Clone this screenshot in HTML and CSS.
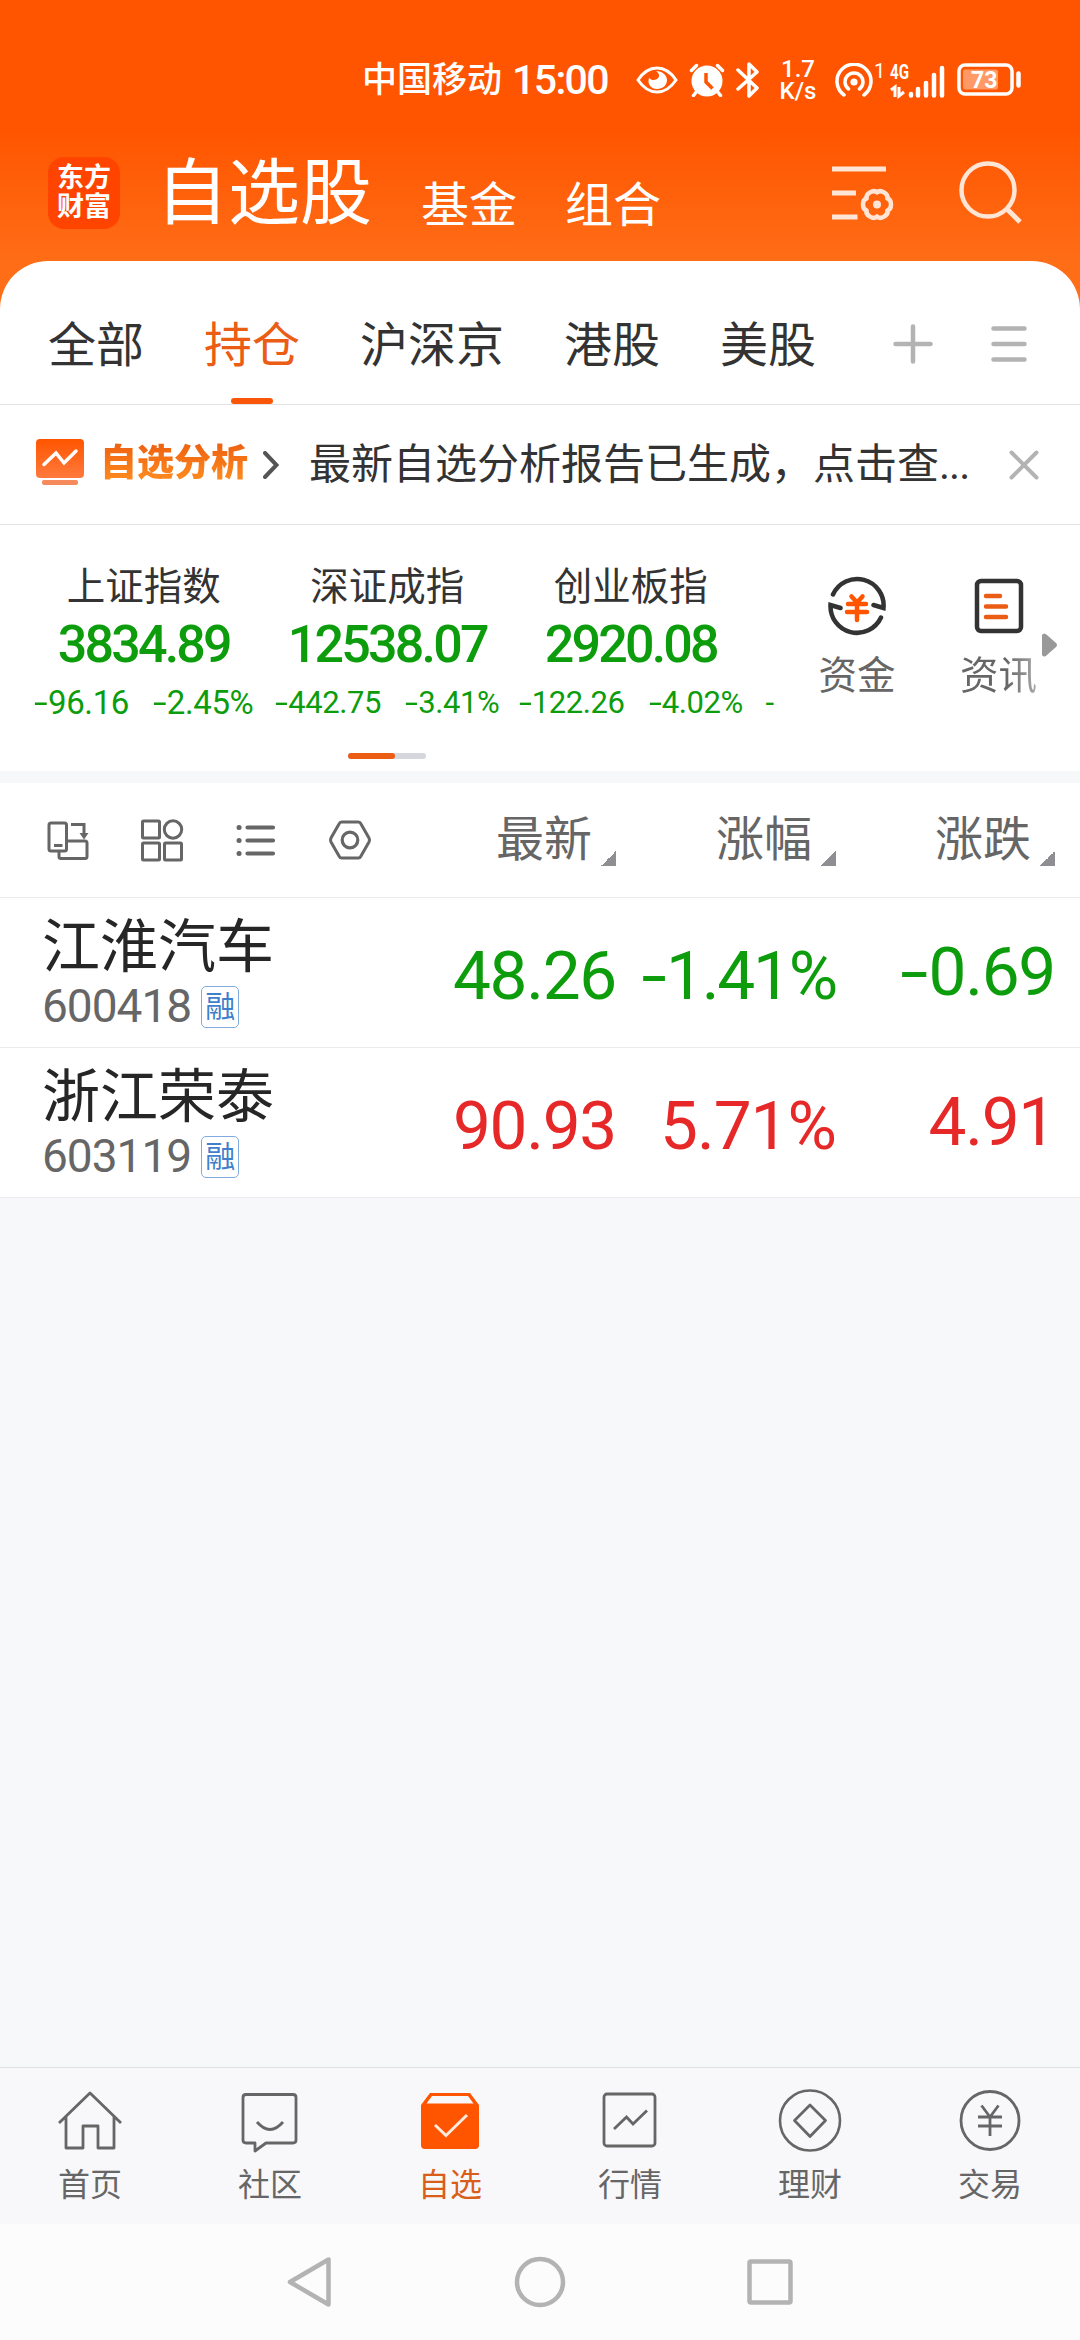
FILE: index.html
```html
<!DOCTYPE html>
<html lang="zh-CN">
<head>
    <meta charset="UTF-8">
    <meta name="viewport" content="width=device-width, initial-scale=1.0">
    <title>自选股</title>
    <link rel="stylesheet" href="styles.css">
</head>
<body>
    <div class="screen">
        <div class="status-bar">
            <span class="carrier">中国移动</span>
            <span class="clock">15:00</span>
            <svg class="st-eye" width="42" height="28" viewBox="0 0 42 28">
                <path d="M2 14C8 5 14 2 21 2s13 3 19 12c-6 9-12 12-19 12S8 23 2 14z" fill="none" stroke="#fff" stroke-width="3"/>
                <path d="M20 5c4 3 4 6 1 8-3 2-6 1-8-1-2 6 2 11 8 11s10-4 10-9-5-9-11-9z" fill="#fff"/>
            </svg>
            <svg class="st-alarm" width="36" height="34" viewBox="0 0 36 34">
                <circle cx="18" cy="18" r="15.500" fill="#fff"/>
                <path d="M2.500 7.500l5-5M33.500 7.500l-5-5M8 28l-3.500 4.500M28 28l3.500 4.500" stroke="#fff" stroke-width="3.500" stroke-linecap="round"/>
                <path d="M17 10v9l6.500 6.500" fill="none" stroke="#ff5500" stroke-width="3.500"/>
            </svg>
            <svg class="st-bt" width="24" height="38" viewBox="0 0 24 38">
                <path d="M2 9l19 18-8 8V3l8 8L2 28" fill="none" stroke="#fff" stroke-width="3.500" stroke-linejoin="round" stroke-linecap="round"/>
            </svg>
            <div class="speed"><span>1.7</span><span>K/s</span></div>
            <svg class="st-hot" width="38" height="34" viewBox="0 0 38 34">
                <circle cx="19" cy="19" r="3.600" fill="#fff"/>
                <path d="M13.500 26a9 9 0 1 1 11 0M9 32a17 17 0 1 1 20 0" fill="none" stroke="#fff" stroke-width="3.500" stroke-linecap="round"/>
            </svg>
            <svg class="st-signal" width="74" height="38" viewBox="0 0 74 38">
                <text x="1" y="17" font-size="20">1</text>
                <text x="17" y="18" font-size="20" font-weight="700" textLength="19" lengthAdjust="spacingAndGlyphs">4G</text>
                <path d="M18 29l4-3v10M26 26v9l5-4" fill="none" stroke="#fff" stroke-width="3"/>
                <path d="M38 33v1.500M45 28v6.500M53 22v12.500M61 14v20.500M69 7v27.500" stroke="#fff" stroke-width="4.500" stroke-linecap="round"/>
            </svg>
            <svg class="st-battery" width="66" height="34" viewBox="0 0 66 34">
                <rect x="2" y="2" width="53" height="29" rx="6" fill="none" stroke="#fff" stroke-width="3.500"/>
                <rect x="6" y="6.500" width="35" height="20" rx="2" fill="#ff9966"/>
                <path d="M61.500 10.500v12" stroke="#fff" stroke-width="4.500" stroke-linecap="round"/>
                <text x="14" y="25" font-size="23" font-weight="700">73</text>
            </svg>
        </div>

        <div class="app-head">
            <div class="logo"><span>东方</span><span>财富</span></div>
            <div class="head-tabs">
                <span class="head-tab current">自选股</span>
                <span class="head-tab">基金</span>
                <span class="head-tab">组合</span>
            </div>
            <svg class="head-menu" width="64" height="58" viewBox="0 0 64 58">
                <path d="M0 4h54M0 28h24M0 52h25.500" stroke="#ffe5d5" stroke-width="5"/>
                <g transform="translate(45 39.500)">
                    <path d="M0-12C3.500-15.500 11.700-10.800 10.400-6 15.200-4.700 15.200 4.700 10.400 6 11.700 10.800 3.500 15.500 0 12-3.500 15.500-11.700 10.800-10.400 6-15.200 4.700-15.200-4.700-10.400-6-11.700-10.800-3.500-15.500 0-12z" fill="none" stroke="#ffe5d5" stroke-width="4.500" stroke-linejoin="round"/>
                    <circle r="4" fill="#ffe5d5"/>
                </g>
            </svg>
            <svg class="head-search" width="64" height="64" viewBox="0 0 64 64">
                <circle cx="29" cy="29" r="26.500" fill="none" stroke="#ffe5d5" stroke-width="4.500"/>
                <path d="M47.500 47.500L61 61" stroke="#ffe5d5" stroke-width="5"/>
            </svg>
        </div>

        <div class="sheet">
            <div class="tabs">
                <span class="tab">全部</span>
                <span class="tab active">持仓</span>
                <span class="tab">沪深京</span>
                <span class="tab">港股</span>
                <span class="tab">美股</span>
                <svg class="tab-add" width="40" height="40" viewBox="0 0 40 40">
                    <path d="M20 2.500v35M2.500 20h35" stroke="#b3b3b3" stroke-width="4.500" stroke-linecap="round"/>
                </svg>
                <svg class="tab-list" width="36" height="38" viewBox="0 0 36 38">
                    <path d="M2.500 3.500h31M2.500 19h31M2.500 34.500h31" stroke="#b3b3b3" stroke-width="4.500" stroke-linecap="round"/>
                </svg>
            </div>

            <div class="notice">
                <svg class="notice-icon" width="48" height="48" viewBox="0 0 48 48">
                    <defs>
                        <linearGradient id="boxFill" x1="0" y1="0" x2="0" y2="1">
                            <stop offset="0" stop-color="#ff5500"/>
                            <stop offset="1" stop-color="#ff7a3d"/>
                        </linearGradient>
                    </defs>
                    <rect width="48" height="39" rx="4" fill="url(#boxFill)"/>
                    <path d="M8 25.500L20 14l8 10 12-12" fill="none" stroke="#fff" stroke-width="3.500" stroke-linecap="round"/>
                    <rect x="6" y="41" width="36" height="5" rx="2" fill="#f58a5c"/>
                </svg>
                <span class="notice-title">自选分析</span>
                <svg class="notice-arrow" width="16" height="28" viewBox="0 0 16 28">
                    <path d="M2 2l11.500 12L2 26" fill="none" stroke="#555" stroke-width="4" stroke-linecap="round"/>
                </svg>
                <span class="notice-text">最新自选分析报告已生成，点击查<span class="dots">...</span></span>
                <svg class="notice-close" width="30" height="30" viewBox="0 0 30 30">
                    <path d="M2.500 2.500l25 25M27.500 2.500l-25 25" stroke="#b3b3b3" stroke-width="4" stroke-linecap="round"/>
                </svg>
            </div>

            <div class="market">
                <div class="indices">
                    <div class="index">
                        <div class="index-name">上证指数</div>
                        <div class="index-value">3834.89</div>
                        <div class="index-change large"><span><b>-</b>96.16</span><span><b>-</b>2.45%</span></div>
                    </div>
                    <div class="index">
                        <div class="index-name">深证成指</div>
                        <div class="index-value">12538.07</div>
                        <div class="index-change"><span><b>-</b>442.75</span><span><b>-</b>3.41%</span></div>
                    </div>
                    <div class="index">
                        <div class="index-name">创业板指</div>
                        <div class="index-value">2920.08</div>
                        <div class="index-change"><span><b>-</b>122.26</span><span><b>-</b>4.02%</span></div>
                    </div>
                    <div class="index-next">-</div>
                </div>
                <div class="tool">
                    <svg width="60" height="60" viewBox="0 0 60 60">
                        <path d="M6 18.500A26.500 26.500 0 0 1 56.500 32l-10-3M54 41.500A26.500 26.500 0 0 1 3.500 29l10 3" fill="none" stroke="#333" stroke-width="4.500" stroke-linecap="round"/>
                        <path d="M24.500 20.500l5.500 6 5.500-6M21 28h18M20 36h20M30 27v17" fill="none" stroke="#ff5500" stroke-width="4.500" stroke-linecap="round"/>
                    </svg>
                    <span>资金</span>
                </div>
                <div class="tool last">
                    <svg width="60" height="60" viewBox="0 0 60 60">
                        <rect x="8" y="5" width="44" height="50" rx="4" fill="none" stroke="#333" stroke-width="4.500"/>
                        <path d="M17 20h14M17 30.500h20M17 41h20" stroke="#eb5c14" stroke-width="4.500" stroke-linecap="round"/>
                    </svg>
                    <span>资讯</span>
                </div>
                <svg class="more" width="15" height="24" viewBox="0 0 15 24">
                    <path d="M0 2Q2-1 5 2l9 8q2 2 0 4l-9 8q-3 3-5 0z" fill="#999"/>
                </svg>
            </div>
            <div class="pager"><i></i></div>
        </div>

        <div class="table">
            <div class="table-head">
                <div class="view-icons">
                    <svg width="44" height="44" viewBox="0 0 44 44">
                        <g fill="none" stroke="#666" stroke-width="3">
                            <rect x="3" y="5" width="17.500" height="28" rx="2"/>
                            <path d="M8 27.500h8.500M25 6.500h13V16M20.500 23H39q2 0 2 2v13.500q0 2-2 2H15q-2 0-2-2V33"/>
                        </g>
                        <path d="M33.500 15h9L38 21.500z" fill="#666"/>
                    </svg>
                    <svg width="44" height="44" viewBox="0 0 44 44">
                        <g fill="none" stroke="#666" stroke-width="3">
                            <rect x="2.500" y="3" width="17" height="17" rx="1"/>
                            <circle cx="33" cy="11.500" r="8.700"/>
                            <rect x="2.500" y="25" width="17" height="17" rx="1"/>
                            <rect x="24.500" y="25" width="17" height="17" rx="1"/>
                        </g>
                    </svg>
                    <svg width="44" height="44" viewBox="0 0 44 44">
                        <path d="M5 9.500h.1M5 22.500h.1M5 35.500h.1" stroke="#666" stroke-width="5" stroke-linecap="round"/>
                        <path d="M13.500 9.500H39M13.500 22.500H39M13.500 35.500H39" stroke="#666" stroke-width="4.200" stroke-linecap="round"/>
                    </svg>
                    <svg width="44" height="44" viewBox="0 0 44 44">
                        <path d="M13.500 4h17q1.500 0 2.500 2l8 14q1 2 0 4l-8 14q-1 2-2.500 2h-17q-1.500 0-2.500-2L3 24q-1-2 0-4l8-14q1-2 2.500-2z" fill="none" stroke="#666" stroke-width="3"/>
                        <circle cx="22" cy="22" r="7.800" fill="none" stroke="#666" stroke-width="3.200"/>
                    </svg>
                </div>
                <div class="col-name">最新<i></i></div>
                <div class="col-name">涨幅<i></i></div>
                <div class="col-name">涨跌<i></i></div>
            </div>
            <div class="row down">
                <div class="stock">
                    <div class="stock-name">江淮汽车</div>
                    <div class="stock-code">600418<span class="badge">融</span></div>
                </div>
                <div class="num">48.26</div>
                <div class="num pct"><b>-</b>1.41%</div>
                <div class="num diff"><b>-</b>0.69</div>
            </div>
            <div class="row up">
                <div class="stock">
                    <div class="stock-name">浙江荣泰</div>
                    <div class="stock-code">603119<span class="badge">融</span></div>
                </div>
                <div class="num">90.93</div>
                <div class="num pct">5.71%</div>
                <div class="num diff">4.91</div>
            </div>
        </div>

        <div class="blank"></div>

        <div class="bottom-bar">
            <div class="item">
                <svg width="66" height="66" viewBox="0 0 66 66">
                    <path d="M2 34L33 4l31 30M9 28v31h17V37h15v22h16V28" fill="none" stroke="#666" stroke-width="2.800" stroke-linejoin="round"/>
                </svg>
                <span>首页</span>
            </div>
            <div class="item">
                <svg width="66" height="66" viewBox="0 0 66 66">
                    <path d="M8 5.500h48q3 0 3 3V51q0 3-3 3H29l-11 8v-8H9q-3 0-3-3V8.500q0-3 3-3z" fill="none" stroke="#666" stroke-width="2.800" stroke-linejoin="round"/>
                    <path d="M20 33q13 15 26 0" fill="none" stroke="#666" stroke-width="2.800"/>
                </svg>
                <span>社区</span>
            </div>
            <div class="item active">
                <svg width="66" height="66" viewBox="0 0 66 66">
                    <path d="M4 16L13 4h40l9 12v40q0 4-4 4H8q-4 0-4-4z" fill="#ff5500"/>
                    <path d="M9.500 14.500L15 7h36l5.500 7.500z" fill="#f8f8fa"/>
                    <path d="M18 36l11 10.500L50 26" fill="none" stroke="#ffeadd" stroke-width="3"/>
                </svg>
                <span>自选</span>
            </div>
            <div class="item">
                <svg width="66" height="66" viewBox="0 0 66 66">
                    <rect x="7" y="5" width="51" height="52" rx="3" fill="none" stroke="#666" stroke-width="2.800"/>
                    <path d="M17 40l12.500-12 6.500 7 14-13.500" fill="none" stroke="#666" stroke-width="2.800"/>
                </svg>
                <span>行情</span>
            </div>
            <div class="item">
                <svg width="66" height="66" viewBox="0 0 66 66">
                    <circle cx="33" cy="31.500" r="30" fill="none" stroke="#666" stroke-width="2.600"/>
                    <path d="M33 16l15.500 15.500L33 47.500 17.500 31.500z" fill="none" stroke="#666" stroke-width="2.800" stroke-linejoin="round"/>
                </svg>
                <span>理财</span>
            </div>
            <div class="item">
                <svg width="66" height="66" viewBox="0 0 66 66">
                    <circle cx="33" cy="31.500" r="29" fill="none" stroke="#666" stroke-width="2.800"/>
                    <path d="M24.500 16.500L33 28l8.500-11.500M21 28h24M21 37h24M33 28v19" fill="none" stroke="#666" stroke-width="2.800"/>
                </svg>
                <span>交易</span>
            </div>
        </div>

        <div class="sys-nav">
            <svg width="50" height="54" viewBox="0 0 50 54">
                <path d="M43.500 4.500v45L5 27z" fill="none" stroke="#b3b3b3" stroke-width="4.500" stroke-linejoin="round"/>
            </svg>
            <svg width="54" height="54" viewBox="0 0 54 54">
                <circle cx="27" cy="27" r="23" fill="none" stroke="#b3b3b3" stroke-width="4.500"/>
            </svg>
            <svg width="50" height="54" viewBox="0 0 50 54">
                <rect x="4.500" y="6.500" width="41" height="41" rx="1.500" fill="none" stroke="#b3b3b3" stroke-width="4.500"/>
            </svg>
        </div>
    </div>
</body>
</html>
```
FILE: styles.css
```css
* {
    box-sizing: border-box;
    margin: 0;
    padding: 0;
}

body {
    font-family: Roboto, "Noto Sans CJK SC", sans-serif;
    color: #333;
    background-color: #f7f8fa;
}

svg {
    display: block;
    flex: none;
}

.screen {
    width: 1080px;
    height: 2340px;
    display: flex;
    flex-direction: column;
    overflow: hidden;
    background: linear-gradient(#ff5500 0, #ff5500 130px, #ff6d17 262px, #ff6d17 100%);
}

/* status bar */
.status-bar {
    height: 130px;
    padding: 30px 0 0 362px;
    display: flex;
    align-items: center;
    color: #fff;
    white-space: nowrap;
}

.status-bar text {
    fill: #fff;
}

.carrier {
    width: 150px;
    padding-top: 2px;
    font-size: 35px;
    font-weight: 500;
    line-height: 40px;
}

.clock {
    width: 124px;
    font-size: 41px;
    font-weight: 500;
    line-height: 40px;
    letter-spacing: -1.6px;
}

.st-alarm {
    margin-left: 11px;
}

.st-bt {
    margin-left: 11px;
}

.speed {
    width: 38px;
    margin-left: 19px;
    font-size: 24px;
    font-weight: 500;
    line-height: 22px;
    text-align: center;
}

.speed span {
    display: block;
}

.st-hot {
    margin-left: 18px;
}

.st-signal {
    margin-left: 0;
}

.st-battery {
    margin-left: 10px;
}

/* app header */
.app-head {
    height: 131px;
    padding: 0 57px 0 48px;
    display: flex;
    align-items: center;
    color: #fff;
}

.logo {
    width: 72px;
    height: 72px;
    margin-top: -5px;
    padding-top: 7px;
    border-radius: 16px;
    background-color: #ff4400;
    font-size: 27px;
    font-weight: 700;
    line-height: 29px;
    text-align: center;
}

.logo span {
    display: block;
}

.head-tabs {
    flex: 1;
    margin: 4px 0 0 36px;
    display: flex;
    align-items: baseline;
}

.head-tab {
    margin-right: 48px;
    padding-top: 3px;
    font-size: 48px;
    line-height: 84px;
}

.head-tab.current {
    margin-right: 49px;
    padding-top: 0;
    font-size: 72px;
}

/* secondary tabs sit a little below the title baseline */
.head-tab + .head-tab {
    position: relative;
    top: 4px;
}

.head-menu {
    margin-top: -3px;
}

.head-search {
    margin: -6px 0 0 63px;
}

/* white sheet */
.sheet {
    height: 510px;
    flex: none;
    background-color: #fff;
    border-radius: 48px 48px 0 0;
}

.tabs {
    height: 144px;
    padding: 22px 53px 0 48px;
    display: flex;
    align-items: center;
    gap: 60px;
    border-bottom: 1px solid #e4e4e6;
}

.tab {
    position: relative;
    padding-top: 5px;
    font-size: 48px;
    line-height: 116px;
}

.tab.active {
    color: #eb5c14;
}

.tab.active::after {
    content: "";
    position: absolute;
    left: 50%;
    bottom: 0;
    width: 42px;
    height: 6px;
    margin-left: -21px;
    border-radius: 3px;
    background-color: #fa560a;
}

.tab-add {
    margin: 1px 0 0 17px;
}

.tab-list {
    margin: 1px 0 0 -2px;
}

.notice {
    height: 120px;
    padding: 0 41px 0 36px;
    display: flex;
    align-items: center;
    border-bottom: 1px solid #e4e4e6;
}

.notice-icon {
    margin-top: -3px;
}

.notice-title {
    width: 149px;
    margin: -2px 14px 0 16px;
    font-size: 37px;
    font-weight: 900;
    line-height: 50px;
    color: #f97a14;
    background: linear-gradient(#ef6412 15%, #ff8c1e 85%);
    -webkit-background-clip: text;
    background-clip: text;
    -webkit-text-fill-color: transparent;
}

.notice-text {
    flex: 1;
    margin: 0 0 0 30px;
    font-size: 42px;
    line-height: 60px;
    white-space: nowrap;
}

.dots {
    letter-spacing: -1px;
}

.market {
    height: 228px;
    display: flex;
}

.indices {
    width: 775px;
    padding: 38px 0 0 22px;
    display: flex;
    overflow: hidden;
}

/* minus sign, stretched to be wider than the Roboto hyphen */
.index b,
.num b {
    display: inline-block;
    width: 0.42em;
    font-weight: 400;
    letter-spacing: 0;
    text-align: center;
    transform: scaleX(1.5);
}

.index {
    width: 243.5px;
    flex: none;
    text-align: center;
    white-space: nowrap;
}

.index-name {
    font-size: 38.5px;
    line-height: 48px;
}

.index-value {
    margin-top: 8px;
    font-size: 52px;
    font-weight: 500;
    line-height: 52px;
    letter-spacing: -2.8px;
    color: #0c9c0c;
}

.index-change {
    display: flex;
    justify-content: center;
    gap: 24px;
    font-size: 31px;
    line-height: 63px;
    letter-spacing: -0.4px;
    color: #0c9c0c;
}

.index-change.large {
    font-size: 33px;
}

.index-next {
    margin-top: 108px;
    padding-left: 13px;
    font-size: 31px;
    line-height: 63px;
    color: #0c9c0c;
}

.tool {
    width: 140px;
    padding-top: 51px;
    margin-left: 12px;
    display: flex;
    flex-direction: column;
    align-items: center;
    font-size: 38.5px;
    line-height: 50px;
    color: #666;
}

.tool.last {
    width: 115px;
    margin-left: 14px;
}

.tool span {
    margin-top: 15px;
}

.tool.last span {
    background: linear-gradient(90deg, #666 60%, #aaa);
    -webkit-background-clip: text;
    background-clip: text;
    -webkit-text-fill-color: transparent;
}

.more {
    margin: 108px 0 0 -14px;
}

.pager {
    width: 78px;
    height: 6px;
    margin-left: 348px;
    border-radius: 3px;
    background-color: #d5d7dd;
}

.pager i {
    display: block;
    width: 47px;
    height: 6px;
    border-radius: 3px;
    background-color: #eb5c14;
}

/* stock list */
.table {
    border-top: 12px solid #f7f8fa;
    background-color: #fff;
}

.table-head,
.row {
    display: grid;
    grid-template-columns: 1fr 220px 220px 219px;
    padding: 0 25px 0 42px;
    border-bottom: 1px solid #ebebed;
}

.table-head {
    height: 115px;
    align-items: center;
}

.view-icons {
    display: flex;
    gap: 50px;
    margin-left: 4px;
}

.col-name {
    display: flex;
    justify-content: flex-end;
    font-size: 48px;
    line-height: 60px;
    color: #666;
}

.col-name i {
    width: 15px;
    height: 15px;
    margin: 41px 0 0 9px;
    background: linear-gradient(135deg, transparent 50%, #8e8e93 50%);
}

.row {
    height: 150px;
}

.stock-name {
    padding-top: 15px;
    font-size: 58px;
    line-height: 68px;
    color: #262626;
    white-space: nowrap;
}

.stock-code {
    display: flex;
    align-items: center;
    font-size: 46px;
    line-height: 50px;
    letter-spacing: -1px;
    color: #666;
}

.badge {
    width: 38px;
    height: 42px;
    margin: 1px 0 0 10px;
    border: 1.5px solid #7fabde;
    border-radius: 5px;
    font-size: 30px;
    line-height: 40px;
    letter-spacing: 0;
    text-align: center;
    color: #3f7fcb;
}

.num {
    padding-top: 4px;
    font-size: 67.5px;
    line-height: 148px;
    text-align: right;
    white-space: nowrap;
    letter-spacing: -1.3px;
}

.num.diff {
    padding-top: 0;
}

.down .num {
    color: #0c9c0c;
}

.down .pct {
    letter-spacing: -2.2px;
}

.num.pct b {
    width: 0.36em;
    transform: scaleX(1.35);
}

.up .num {
    color: #e62828;
}

.up .pct {
    letter-spacing: -1px;
}

.blank {
    flex: 1;
    background-color: #f7f8fa;
}

/* bottom navigation */
.bottom-bar {
    height: 157px;
    display: flex;
    border-top: 1px solid #e1e1e4;
    background-color: #f8f8fa;
}

.item {
    flex: 1;
    padding-top: 21px;
    display: flex;
    flex-direction: column;
    align-items: center;
    font-size: 32px;
    line-height: 40px;
    color: #666;
}

.item span {
    margin-top: 10px;
}

.item.active {
    color: #d95d1b;
}

.sys-nav {
    height: 116px;
    display: flex;
    justify-content: center;
    align-items: center;
    gap: 178px;
    background-color: #fcfcfc;
}
```
